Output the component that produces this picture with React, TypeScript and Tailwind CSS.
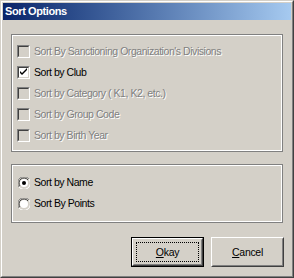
import React from "react";

function CheckBox({ checked, disabled, label }: { checked?: boolean; disabled?: boolean; label: string }) {
  return (
    <div className="flex h-[21px] items-center">
      <div className="h-[13px] w-[13px] border border-t-[#808080] border-l-[#808080] border-b-white border-r-white">
        <div
          className={`relative h-full w-full border border-t-[#404040] border-l-[#404040] border-b-[#d4d0c8] border-r-[#d4d0c8] ${disabled ? "bg-[#d4d0c8]" : "bg-white"}`}
        >
          {checked && (
            <svg className="absolute left-0 top-0" width="9" height="9" viewBox="0 0 9 9">
              <path d="M1 3 L1 5 L3 7 L8 2 L8 0 L3 5 Z" fill="#000" />
            </svg>
          )}
        </div>
      </div>
      <span
        className={`ml-[4px] text-[10.5px] tracking-[-0.45px] leading-none ${disabled ? "text-[#808080] [text-shadow:1px_1px_0_#fff]" : "text-black"}`}
      >
        {label}
      </span>
    </div>
  );
}

function Radio({ checked, label }: { checked?: boolean; label: string }) {
  return (
    <div className="flex h-[21px] items-center">
      <svg width="12" height="12" viewBox="0 0 12 12" className="ml-[1px]">
        <path d="M11 2 A5.5 5.5 0 0 0 1 10" stroke="#808080" strokeWidth="1" fill="none" />
        <path d="M10 3 A4.5 4.5 0 0 0 2 9" stroke="#404040" strokeWidth="1" fill="none" />
        <circle cx="6" cy="6" r="4" fill="#fff" />
        <path d="M1 10 A5.5 5.5 0 0 0 11 2" stroke="#fff" strokeWidth="1" fill="none" />
        {checked && <circle cx="6" cy="6" r="2" fill="#000" />}
      </svg>
      <span className="ml-[4px] text-[10.5px] tracking-[-0.45px] leading-none text-black">{label}</span>
    </div>
  );
}

function GroupBox({ children }: { children: React.ReactNode }) {
  return (
    <div className="border border-[#808080]">
      <div className="border-l border-t border-white">
        <div className="border-b border-r border-white">{children}</div>
      </div>
    </div>
  );
}

export default function App() {
  return (
    <div className="h-[278px] w-[294px] bg-[#d4d0c8] font-['Liberation_Sans',Arial,sans-serif]">
      <div className="h-full w-full border border-t-[#d4d0c8] border-l-[#d4d0c8] border-b-[#404040] border-r-[#404040]">
        <div className="flex h-full w-full flex-col border border-t-white border-l-white border-b-[#808080] border-r-[#808080] p-[1px]">
          <div className="flex h-[17px] items-center bg-gradient-to-r from-[#0a246a] to-[#a6caf0] pl-[2px]">
            <span className="text-[11px] font-bold tracking-[-0.4px] leading-none text-white">Sort Options</span>
          </div>

          <div className="mx-[8px] mt-[14px]">
            <GroupBox>
              <div className="pl-[4px] pt-[5px] pb-[4px]">
                <CheckBox disabled label="Sort By Sanctioning Organization's Divisions" />
                <CheckBox checked label="Sort by Club" />
                <CheckBox disabled label="Sort by Category ( K1, K2, etc.)" />
                <CheckBox disabled label="Sort by Group Code" />
                <CheckBox disabled label="Sort by Birth Year" />
              </div>
            </GroupBox>
          </div>

          <div className="mx-[8px] mt-[12px]">
            <GroupBox>
              <div className="pl-[4px] pt-[6px] pb-[7px]">
                <Radio checked label="Sort by Name" />
                <Radio label="Sort By Points" />
              </div>
            </GroupBox>
          </div>

          <div className="mr-[7px] mt-[14px] flex justify-end gap-[7px]">
            <div className="h-[30px] w-[73px] border border-black">
              <div className="h-full w-full border border-t-white border-l-white border-b-[#404040] border-r-[#404040]">
                <div className="flex h-full w-full items-center justify-center border border-t-[#d4d0c8] border-l-[#d4d0c8] border-b-[#808080] border-r-[#808080] p-[2px]">
                  <div className="flex h-full w-full items-center justify-center border border-dotted border-black">
                    <span className="text-[10.5px] tracking-[-0.3px] leading-none text-black">
                      <span className="underline">O</span>kay
                    </span>
                  </div>
                </div>
              </div>
            </div>
            <div className="h-[30px] w-[73px] border border-t-white border-l-white border-b-[#404040] border-r-[#404040]">
              <div className="flex h-full w-full items-center justify-center border border-t-[#d4d0c8] border-l-[#d4d0c8] border-b-[#808080] border-r-[#808080]">
                <span className="text-[10.5px] tracking-[-0.3px] leading-none text-black">
                  <span className="underline">C</span>ancel
                </span>
              </div>
            </div>
          </div>
        </div>
      </div>
    </div>
  );
}
